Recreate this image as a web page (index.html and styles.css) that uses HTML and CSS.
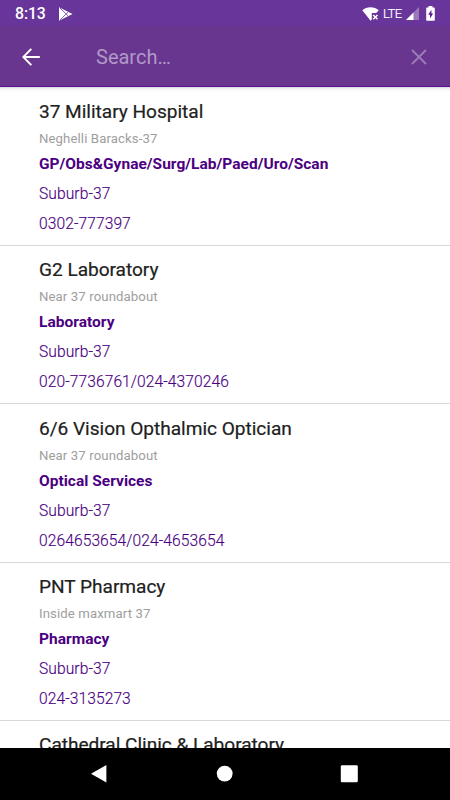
FILE: index.html
```html
<!DOCTYPE html>
<html lang="en">
<head>
<meta charset="utf-8">
<title>Search</title>
<link rel="stylesheet" href="styles.css">
</head>
<body>
<div class="screen">
  <header class="status">
    <span class="clock">8:13</span>
    <svg class="play" width="14" height="14" viewBox="0 0 14 14"><path d="M0 .3 13.5 7 0 13.7Z" fill="#fff"/><path d="M1 1 9.5 9.3M1 13 9.5 4.7" stroke="#68359a" stroke-width=".8"/></svg>
    <svg class="wifi" width="18" height="14" viewBox="0 0 18 14"><path d="M.3 3.2C4.500-.7 12.500-.7 16.800 3.200L14.200 6H9.800v6.500L8.600 13.700Z" fill="#fff"/><path d="m11.200 8 4.300 4.300m0-4.300-4.300 4.300" stroke="#fff" stroke-width="1.500"/></svg>
    <span class="network">LTE</span>
    <svg class="signal" width="13" height="13" viewBox="0 0 13 13"><path d="M13 0v13H0Z" fill="#9a78bb"/><path d="M7.500 5.500V13H0Z" fill="#fff"/></svg>
    <svg class="battery" width="9" height="15" viewBox="0 0 9 15"><path d="M2.500 0h4v1.500H8.200q.6 0 .6.6V14q0 .7-.7.7H.9q-.7 0-.7-.7V2.100q0-.6.6-.6h1.700Z" fill="#fff"/><path d="M5.400 3.800 2.200 8.700h1.900v3.700l3-5H5.400Z" fill="#5b168f"/></svg>
  </header>
  <div class="toolbar">
    <svg class="back" width="18" height="18" viewBox="0 0 18 18"><path d="M17.800 9H1.500M9.300 .9 1.300 9l8 8.100" fill="none" stroke="#fff" stroke-width="2"/></svg>
    <span class="query">Search…</span>
    <svg class="clear" width="16" height="16" viewBox="0 0 16 16"><path d="m1 1 14 14M15 1 1 15" stroke="#9c7bb9" stroke-width="1.900"/></svg>
  </div>
  <main class="list">
    <article class="item">
      <h2>37 Military Hospital</h2>
      <p class="address">Neghelli Baracks-37</p>
      <p class="service">GP/Obs&amp;Gynae/Surg/Lab/Paed/Uro/Scan</p>
      <p class="detail">Suburb-37</p>
      <p class="detail">0302-777397</p>
    </article>
    <article class="item">
      <h2>G2 Laboratory</h2>
      <p class="address">Near 37 roundabout</p>
      <p class="service">Laboratory</p>
      <p class="detail">Suburb-37</p>
      <p class="detail">020-7736761/024-4370246</p>
    </article>
    <article class="item">
      <h2>6/6 Vision Opthalmic Optician</h2>
      <p class="address">Near 37 roundabout</p>
      <p class="service">Optical Services</p>
      <p class="detail">Suburb-37</p>
      <p class="detail">0264653654/024-4653654</p>
    </article>
    <article class="item">
      <h2>PNT Pharmacy</h2>
      <p class="address">Inside maxmart 37</p>
      <p class="service">Pharmacy</p>
      <p class="detail">Suburb-37</p>
      <p class="detail">024-3135273</p>
    </article>
    <article class="item">
      <h2>Cathedral Clinic &amp; Laboratory</h2>
    </article>
  </main>
  <nav class="navbar">
    <svg width="18" height="20" viewBox="0 0 18 20"><path d="M16.400 1v17.600L1 9.800Z" fill="#fff"/></svg>
    <svg width="18" height="18" viewBox="0 0 18 18"><circle cx="9.700" cy="8.600" r="7.900" fill="#fff"/></svg>
    <svg width="18" height="18" viewBox="0 0 18 18"><rect x=".8" y=".3" width="17" height="17" rx="1.300" fill="#fff"/></svg>
  </nav>
</div>
</body>
</html>
```
FILE: styles.css
```css
* { box-sizing: border-box; }
body { margin: 0; font-family: Roboto, sans-serif; }
.screen { width: 450px; height: 800px; display: flex; flex-direction: column; overflow: hidden; background: #fff; }
.status { height: 26px; flex: none; display: flex; align-items: center; background: #68359a; color: #fff; padding: 1px 15px 0; }
.clock { width: 44px; font-size: 15.8px; font-weight: 500; letter-spacing: -.1px; }
.wifi { margin-left: auto; }
.wifi, .network, .signal, .play, .battery { flex: none; }
.network { width: 23px; margin-left: 3px; font-size: 13px; font-weight: 300; letter-spacing: -.5px; -webkit-text-stroke: .2px #fff; }
.battery { margin-left: 7px; }
.toolbar { height: 61px; flex: none; display: flex; align-items: center; background: #68358f; border-bottom: 1px solid #5b0f91; padding: 2px 23px 0 22px; }
.query { margin-left: 56px; font-size: 20px; color: #b199c8; }
.clear { margin-left: auto; }
.list { flex: 1; min-height: 0; overflow: hidden; padding-top: .5px; background: linear-gradient(#d8d8d8, #f5f5f5 2px, #fff 5px); }
.item { height: 158.4px; padding: 10.400px 39px 0; border-bottom: 1px solid #d8d8d8; }
h2, p { margin: 0; white-space: nowrap; }
h2 { font-size: 19.100px; line-height: 28px; font-weight: 400; letter-spacing: -.03px; color: #212121; -webkit-text-stroke: .2px #212121; }
.address { font-size: 13.200px; line-height: 26px; color: #9e9e9e; letter-spacing: .1px; }
.service { font-size: 15.500px; line-height: 24px; font-weight: 700; color: #4b0082; letter-spacing: .02px; }
.detail { font-size: 15.600px; line-height: 30px; font-weight: 300; color: #4b0082; margin-top: 3px; letter-spacing: .08px; -webkit-text-stroke: .15px #4b0082; }
.detail + .detail { margin-top: 0; }
.navbar { height: 52px; flex: none; display: flex; align-items: center; justify-content: space-between; background: #000; padding: 0 92px 0 90px; }
```
